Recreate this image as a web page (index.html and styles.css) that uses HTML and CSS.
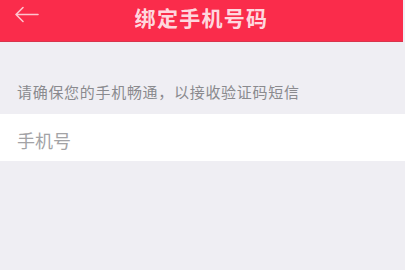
FILE: index.html
```html
<!DOCTYPE html>
<html lang="zh-CN">
<head>
<meta charset="utf-8">
<title>绑定手机号码</title>
<link rel="stylesheet" href="styles.css">
</head>
<body>
<div class="page">
  <header class="header">
    <span class="back" aria-label="返回">
      <svg width="26" height="18" viewBox="0 0 26 18" fill="none">
        <path d="M24 8.5H2M9 1.5L2 8.5L9 15.5" stroke="rgba(255,255,255,0.72)" stroke-width="1.6" stroke-linecap="round" stroke-linejoin="round"/>
      </svg>
    </span>
    <h1 class="title">绑定手机号码</h1>
  </header>
  <p class="hint">请确保您的手机畅通，以接收验证码短信</p>
  <div class="field">
    <span class="placeholder">手机号</span>
  </div>
</div>
</body>
</html>
```

FILE: styles.css
```css
html, body {
  margin: 0;
  padding: 0;
  background: #efeef3;
  font-family: "Noto Sans CJK SC", "Noto Sans", sans-serif;
}
.page {
  width: 405px;
  height: 270px;
  overflow: hidden;
}
.header {
  position: relative;
  height: 41px;
  width: 403px;
  background: #fa2c4b;
  border-bottom: 1px solid #d8344c;
  display: flex;
  justify-content: center;
  align-items: flex-start;
}
.back {
  position: absolute;
  left: 14px;
  top: 6px;
  display: flex;
}
.title {
  margin: 0;
  font-size: 21px;
  font-weight: 700;
  line-height: 34px;
  color: rgba(255, 240, 243, 0.9);
  letter-spacing: 1.3px;
}
.hint {
  margin: 0;
  padding: 40px 0 12px 17px;
  font-size: 15px;
  line-height: 20px;
  letter-spacing: 0.7px;
  color: #8a8a8e;
}
.field {
  height: 47px;
  background: #ffffff;
  display: flex;
  align-items: center;
  padding: 4px 0 0 17px;
  box-sizing: border-box;
}
.placeholder {
  font-size: 18px;
  color: #a3a3a6;
}
```
